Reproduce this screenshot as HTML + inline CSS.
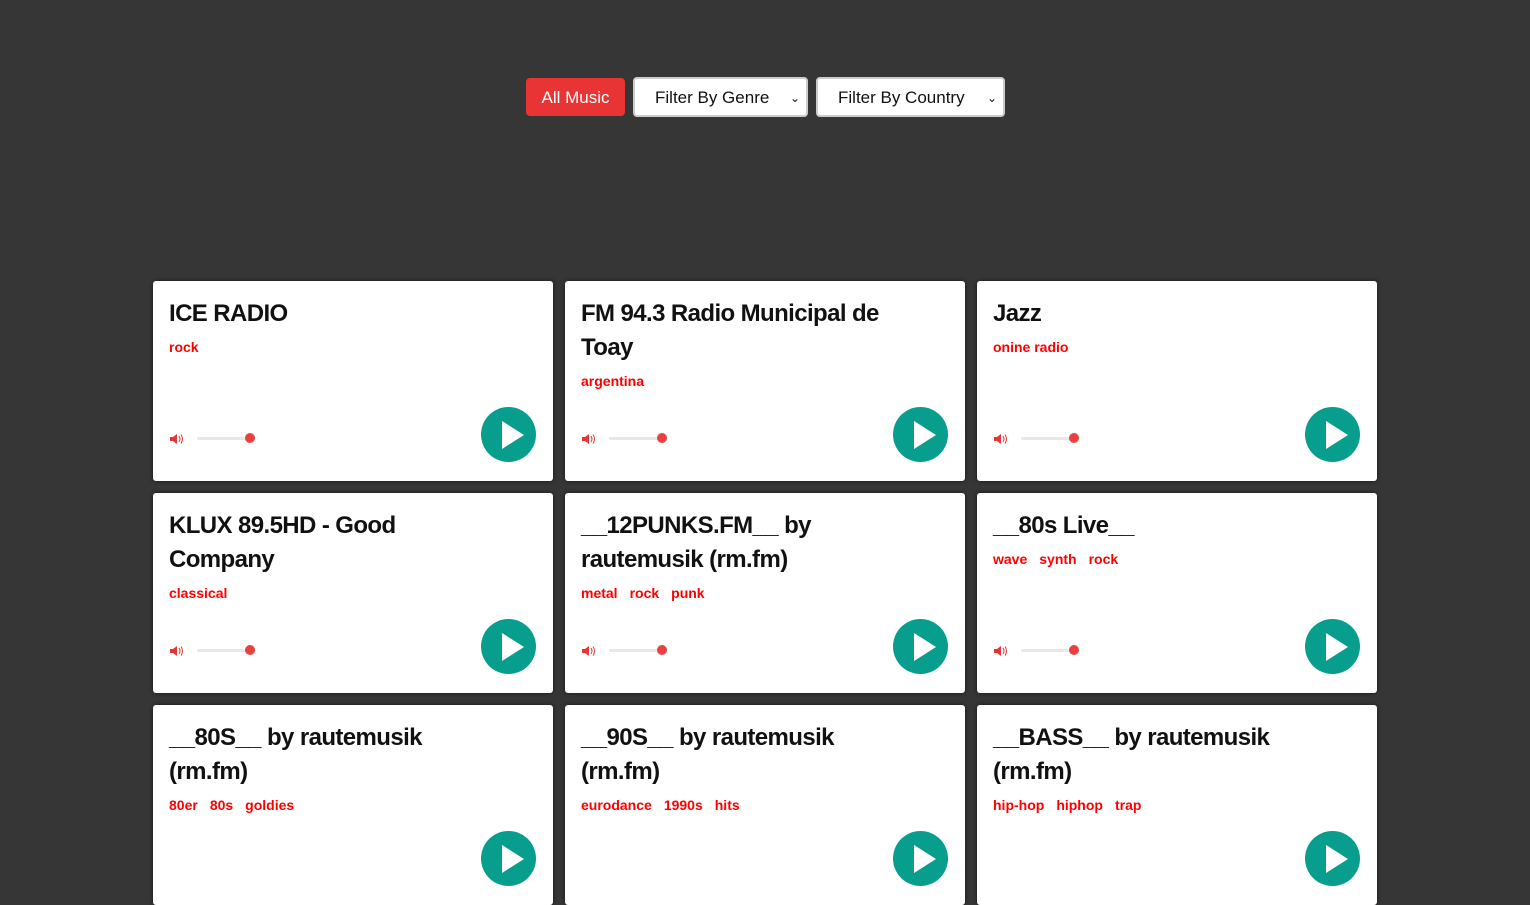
<!DOCTYPE html>
<html><head><meta charset="utf-8"><style>
html,body{margin:0;background:#363636;width:1530px;height:838px;overflow:hidden;font-family:"Liberation Sans",sans-serif;}
.bar{position:absolute;top:78px;left:526px;display:flex;gap:8px}
.btn{width:99px;height:38px;background:#e83434;color:#fff;border-radius:4px;font-size:17px;line-height:40px;text-align:center}
.sel{height:40px;margin-top:-1px;background:#fff;border:2px solid #ccc;border-radius:4px;box-sizing:border-box;font-size:17px;color:#111;line-height:38px;position:relative;padding-left:20px}
.sel span{position:absolute;right:6px;top:0;font-size:12px}
.card{position:absolute;width:400px;height:200px;background:#fff;border-radius:3px;box-shadow:0 0 4px rgba(0,0,0,.6)}
.t{position:absolute;left:16px;top:16px;width:330px;font-size:24px;font-weight:bold;line-height:34px;color:#111;letter-spacing:-0.6px}
.tags{margin-top:8px;font-size:14px;color:#f00;line-height:16px;letter-spacing:0}
.tags b{margin-right:12px}
.spk{position:absolute;left:17px;top:152px}
.sl{position:absolute;left:44px;top:156px;width:54px;height:3px;background:#e8e8e8;border-radius:2px}
.sl:after{content:"";position:absolute;right:-4px;top:-4px;width:10px;height:10px;border-radius:50%;background:#e94040}
.play{position:absolute;left:328px;top:126px;width:55px;height:55px;border-radius:50%;background:#089e8e}
.play:after{content:"";position:absolute;left:21px;top:14px;border-left:22px solid #fff;border-top:14px solid transparent;border-bottom:14px solid transparent}
</style></head><body>
<div class="bar"><div class="btn">All Music</div><div class="sel" style="width:175px">Filter By Genre<span>⌄</span></div><div class="sel" style="width:189px">Filter By Country<span>⌄</span></div></div>

<div class="card" style="left:153px;top:281px"><div class="t">ICE RADIO<div class="tags"><b>rock</b></div></div><svg class="spk" width="14" height="12" viewBox="0 0 14 12"><path d="M0 4h3l4-3v10l-4-3H0z" fill="#e83434"/><path d="M9 3q2 3 0 6M11 1.5q3 4.5 0 9" stroke="#e83434" fill="none"/></svg><div class="sl"></div><div class="play"></div></div>
<div class="card" style="left:565px;top:281px"><div class="t">FM 94.3 Radio Municipal de Toay<div class="tags"><b>argentina</b></div></div><svg class="spk" width="14" height="12" viewBox="0 0 14 12"><path d="M0 4h3l4-3v10l-4-3H0z" fill="#e83434"/><path d="M9 3q2 3 0 6M11 1.5q3 4.5 0 9" stroke="#e83434" fill="none"/></svg><div class="sl"></div><div class="play"></div></div>
<div class="card" style="left:977px;top:281px"><div class="t">Jazz<div class="tags"><b>onine radio</b></div></div><svg class="spk" width="14" height="12" viewBox="0 0 14 12"><path d="M0 4h3l4-3v10l-4-3H0z" fill="#e83434"/><path d="M9 3q2 3 0 6M11 1.5q3 4.5 0 9" stroke="#e83434" fill="none"/></svg><div class="sl"></div><div class="play"></div></div>

<div class="card" style="left:153px;top:493px"><div class="t">KLUX 89.5HD - Good Company<div class="tags"><b>classical</b></div></div><svg class="spk" width="14" height="12" viewBox="0 0 14 12"><path d="M0 4h3l4-3v10l-4-3H0z" fill="#e83434"/><path d="M9 3q2 3 0 6M11 1.5q3 4.5 0 9" stroke="#e83434" fill="none"/></svg><div class="sl"></div><div class="play"></div></div>
<div class="card" style="left:565px;top:493px"><div class="t">__12PUNKS.FM__ by rautemusik (rm.fm)<div class="tags"><b>metal</b><b>rock</b><b>punk</b></div></div><svg class="spk" width="14" height="12" viewBox="0 0 14 12"><path d="M0 4h3l4-3v10l-4-3H0z" fill="#e83434"/><path d="M9 3q2 3 0 6M11 1.5q3 4.5 0 9" stroke="#e83434" fill="none"/></svg><div class="sl"></div><div class="play"></div></div>
<div class="card" style="left:977px;top:493px"><div class="t">__80s Live__<div class="tags"><b>wave</b><b>synth</b><b>rock</b></div></div><svg class="spk" width="14" height="12" viewBox="0 0 14 12"><path d="M0 4h3l4-3v10l-4-3H0z" fill="#e83434"/><path d="M9 3q2 3 0 6M11 1.5q3 4.5 0 9" stroke="#e83434" fill="none"/></svg><div class="sl"></div><div class="play"></div></div>

<div class="card" style="left:153px;top:705px"><div class="t">__80S__ by rautemusik (rm.fm)<div class="tags"><b>80er</b><b>80s</b><b>goldies</b></div></div><div class="play"></div></div>
<div class="card" style="left:565px;top:705px"><div class="t">__90S__ by rautemusik (rm.fm)<div class="tags"><b>eurodance</b><b>1990s</b><b>hits</b></div></div><div class="play"></div></div>
<div class="card" style="left:977px;top:705px"><div class="t">__BASS__ by rautemusik (rm.fm)<div class="tags"><b>hip-hop</b><b>hiphop</b><b>trap</b></div></div><div class="play"></div></div>
</body></html>
